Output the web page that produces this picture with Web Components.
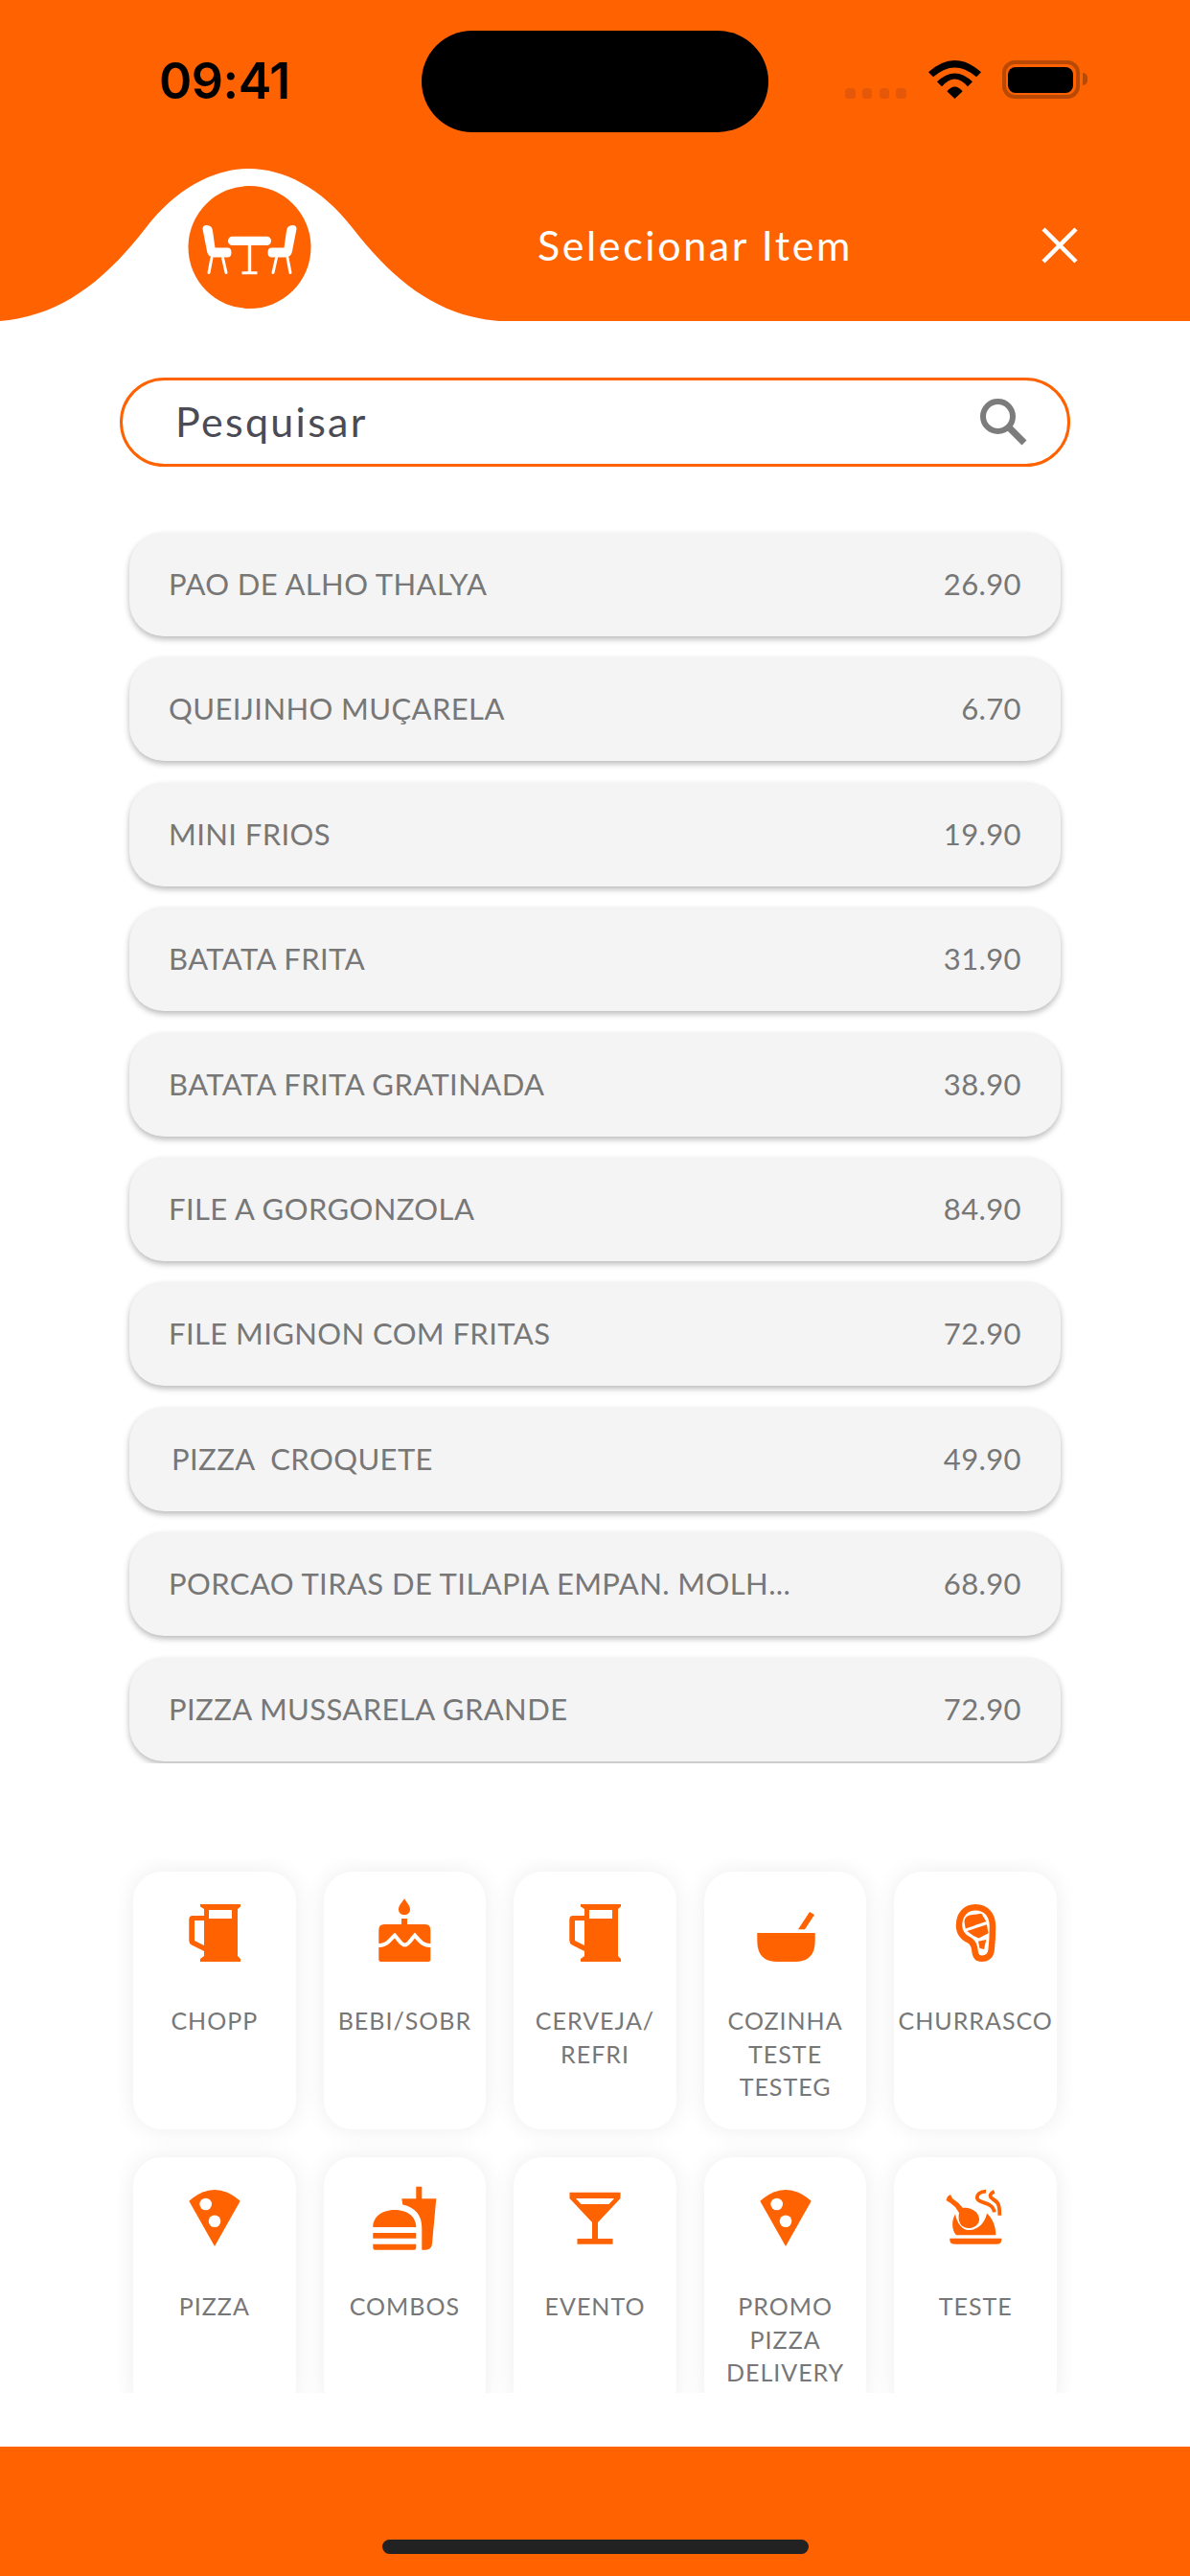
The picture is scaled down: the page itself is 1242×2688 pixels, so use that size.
<!DOCTYPE html>
<html lang="pt">
<head>
<meta charset="utf-8">
<title>Selecionar Item</title>
<style>
  html, body { margin: 0; padding: 0; background: #fff; }
  body { width: 1242px; height: 2688px; overflow: hidden; display: flex; flex-direction: column; font-family: "Lato", "Open Sans", sans-serif; }
</style>
</head>
<body>
<app-header title="Selecionar Item"></app-header>
<search-field placeholder="Pesquisar"></search-field>
<menu-list>
  <menu-row name="PAO DE ALHO THALYA" price="26.90"></menu-row>
  <menu-row name="QUEIJINHO MUÇARELA" price="6.70"></menu-row>
  <menu-row name="MINI FRIOS" price="19.90"></menu-row>
  <menu-row name="BATATA FRITA" price="31.90"></menu-row>
  <menu-row name="BATATA FRITA GRATINADA" price="38.90"></menu-row>
  <menu-row name="FILE A GORGONZOLA" price="84.90"></menu-row>
  <menu-row name="FILE MIGNON COM FRITAS" price="72.90"></menu-row>
  <menu-row name="PIZZA  CROQUETE" price="49.90" indent></menu-row>
  <menu-row name="PORCAO TIRAS DE TILAPIA EMPAN. MOLH..." price="68.90"></menu-row>
  <menu-row name="PIZZA MUSSARELA GRANDE" price="72.90"></menu-row>
</menu-list>
<category-grid>
  <category-card icon="mug" label="CHOPP"></category-card>
  <category-card icon="cake" label="BEBI/SOBR"></category-card>
  <category-card icon="mug" label="CERVEJA/ REFRI"></category-card>
  <category-card icon="bowl" label="COZINHA TESTE TESTEG"></category-card>
  <category-card icon="meat" label="CHURRASCO"></category-card>
  <category-card icon="pizza" label="PIZZA"></category-card>
  <category-card icon="combo" label="COMBOS"></category-card>
  <category-card icon="martini" label="EVENTO"></category-card>
  <category-card icon="pizza" label="PROMO PIZZA DELIVERY"></category-card>
  <category-card icon="chicken" label="TESTE"></category-card>
</category-grid>
<bottom-bar></bottom-bar>

<script>
const ORANGE = '#ff6200';
const ICONS = {
  mug: `<path fill-rule="evenodd" d="M25 20H67V22.5L64 25V74L67 77V80H25V77L29 74V69L16 62.5Q13.3 61 13.3 58V36Q13.3 32 17 32H29V25L25 22.5ZM34 26V35H58V26ZM19 37V58L29 63V37Z"/>`,
  cake: `<path d="M37 35H43V41H37ZM40 14C42 18 46 21 46 25.5C46 29 43.5 31 40 31C36.5 31 34 29 34 25.5C34 21 38 18 40 14ZM13.3 47Q13.3 41 19 41H62Q67.3 41 67.3 47V78Q67.3 80 65 80H15.5Q13.3 80 13.3 78Z"/><path fill="none" stroke="#fff" stroke-width="4" d="M11 62.5C20 65 24 58 30 52.5C35 58 37 62.5 40.5 62.5C44 62.5 46 58 51 52.5C56 58 60 65 70 62.5"/>`,
  bowl: `<path d="M10.3 50H70.7V58Q70.7 80 50 80H31Q10.3 80 10.3 58ZM53 46.3L65 28L70 31L60 46.3Z"/>`,
  meat: `<path fill="none" stroke="${ORANGE}" stroke-width="6.5" d="M40 23.2C52 23.2 58 32 58 43C58 52 57.6 60 56.6 68C55.8 74.500 51 76.800 47 76.800C42.500 76.800 40 74 39.500 69C39 63 37.500 59.500 33.500 57.500C27 54.500 23 50 23 42C23 31 30 23.200 40 23.200Z"/><path d="M28.5 38.500Q28.500 33 34 31.500L46.300 29.700L51.300 38L29.700 45.500ZM31.300 48L52 41.300L53.500 50.300L43.500 55.500L38 53ZM43 58.700L51.300 57L49 67L44.500 66Z"/>`,
  pizza: `<path d="M13.3 31.7Q40 8.3 66.7 31.7L40 79Z"/><circle cx="30.7" cy="35" r="6.3" fill="#fff"/><circle cx="40" cy="52.7" r="6.3" fill="#fff"/>`,
  combo: `<path d="M37.3 29.3H52.3V16.7H58.3V29.3H73.3L69 76Q68.5 82.7 62 82.7H58.3V60Q58.3 40 38.3 35.5ZM7.3 59C7.3 47 18 41 30 41C42 41 52.3 47 52.3 59ZM7.3 65H52.3V70.7H7.3ZM7.3 76.7H52.3V80.5Q52.3 82.7 50 82.7H9.5Q7.3 82.7 7.3 80.5Z"/>`,
  martini: `<path fill-rule="evenodd" d="M13.5 22.7H66.5V29L43 54V71H58.5V76.7H21.5V71H37V54L13.5 29ZM20 29L25.5 35H54.5L60 29Z"/>`,
  chicken: `<path d="M13.3 70.7H67.3V72.5Q67.3 76.7 62 76.7H19Q13.3 76.7 13.3 72.5ZM19 45.5C15 52 15 62 20 67.3H61.3C61.3 58 58 50 52 44.5C51 50 46 62 33 62C26 62 21 55 19 45.5Z"/><path d="M11 27L14 25L16 29L22 33.5L27 39C34 38 43 42 44 50C44.5 56 39 60 33 60C26 60 21 55 23 44L19 38L13.5 33.5L9.5 31Z"/><path fill="none" stroke="${ORANGE}" stroke-width="3.8" d="M51 21.7C45 21.7 41 25 42 29C43 33 51 33 55 36C58 38 59.5 40 59.7 43.3M59.7 21.7C56 23.5 53.5 26.5 58 29.5C63 32.5 65.3 34 65.3 46.7"/>`
};

class AppHeader extends HTMLElement {
  connectedCallback() {
    const shadow = this.attachShadow({ mode: 'open' });
    shadow.innerHTML = `
      <style>
        :host { display: block; position: relative; height: 335px; background: ${ORANGE}; flex: none; color: #fff; }
        .status { display: flex; align-items: flex-start; height: 176px; box-sizing: border-box; }
        .time { margin: 55px 0 0 166px; width: 274px; color: #000; font: 600 52px/60px "Inter", sans-serif; letter-spacing: -.5px; }
        .island { width: 362px; height: 106px; margin-top: 32px; border-radius: 53px; background: #000; }
        .dots { display: flex; gap: 7.3px; margin: 92px 0 0 80px; }
        .dots i { width: 10.5px; height: 10.5px; border-radius: 3.5px; background: #e5580a; }
        .wifi { margin: 63px 0 0 23px; }
        .battery { position: relative; box-sizing: border-box; width: 81px; height: 40px; margin: 63px 0 0 22px; border: 4px solid #b94a05; border-radius: 13px; padding: 2.5px; }
        .battery i { display: block; height: 100%; border-radius: 8px; background: #000; }
        .battery b { position: absolute; right: -12px; top: 9px; width: 5px; height: 13px; background: #b94a05; border-radius: 0 6px 6px 0; }
        .nav { display: flex; align-items: center; height: 60px; margin-top: 50px; position: relative; }
        .title { margin-left: 561px; width: 526px; font: 400 43px/60px "Lato", sans-serif; letter-spacing: 2.6px; }
        .hump { position: absolute; left: 0; bottom: -1px; }
      </style>
      <svg class="hump" width="540" height="161" viewBox="0 175 540 161">
        <path fill="#fff" d="M-20 336C50 336 100 305 152 238C185 195 225 176 260 176C295 176 335 195 368 238C420 305 470 336 540 336Z"/>
        <circle cx="260.5" cy="258" r="64" fill="${ORANGE}"/>
        <g transform="translate(196.5 194)" fill="#fff">
          <g id="chair">
            <path d="M15 45Q15 41 19 41Q25 41 25.5 47L28 64.5H41Q45 64.5 45 69.5Q45 74.5 41 74.5H27Q20.5 74.5 19.5 68Z"/>
            <path fill="none" stroke="#fff" stroke-width="3" stroke-linecap="round" d="M24.5 75L21.5 90.5M36 75L39.5 90.5"/>
          </g>
          <use href="#chair" transform="matrix(-1 0 0 1 128 0)"/>
          <rect x="41.5" y="52.7" width="45" height="9.3" rx="4.6"/>
          <path d="M62.3 62H65.7V89.3H72V92.3H56V89.3H62.3Z"/>
        </g>
      </svg>
      <div class="status">
        <div class="time">09:41</div>
        <div class="island"></div>
        <div class="dots"><i></i><i></i><i></i><i></i></div>
        <svg class="wifi" width="55" height="40" viewBox="0 0 55 40"><path d="M0 12.3Q27.5 -12.2 55 12.3L50 17.3Q27.5 -2.5 5 17.3ZM9 22.3Q27.5 4.5 46 22.3L41 27.3Q27.5 11.5 14 27.3ZM19.3 32.3Q27.5 22.5 35.7 32.3L27.5 40Z"/></svg>
        <div class="battery"><i></i><b></b></div>
      </div>
      <div class="nav">
        <div class="title">${this.getAttribute('title')}</div>
        <svg width="38" height="38" viewBox="0 0 38 38"><path stroke="#fff" stroke-width="4.5" d="M2 2L36 36M36 2L2 36"/></svg>
      </div>`;
  }
}

class SearchField extends HTMLElement {
  connectedCallback() {
    const shadow = this.attachShadow({ mode: 'open' });
    shadow.innerHTML = `
      <style>
        :host { display: flex; align-items: center; justify-content: space-between; flex: none; box-sizing: border-box; height: 93px; margin: 59px 125px 0; padding: 0 42px 2px 55px; border: 3px solid ${ORANGE}; border-radius: 46.5px; }
        span { color: #4b4b55; font: 400 43px/50px "Lato", sans-serif; letter-spacing: 2.3px; }
      </style>
      <span>${this.getAttribute('placeholder')}</span>
      <svg width="50" height="50" viewBox="0 0 50 50" fill="none" stroke="#7c7c7c"><circle cx="19.5" cy="19.5" r="15.5" stroke-width="6"/><path stroke-width="7" d="M30 30L47 47"/></svg>`;
  }
}

class MenuList extends HTMLElement {
  connectedCallback() {
    const shadow = this.attachShadow({ mode: 'open' });
    // the list is a scroller: the last row's shadow gets cut at its lower edge
    shadow.innerHTML = `
      <style>:host { display: flex; flex-direction: column; gap: 22.4px; flex: none; height: 1294px; box-sizing: border-box; margin: 59px 125px 0; padding: 10px 10px 0; overflow: hidden; }</style>
      <slot></slot>`;
  }
}

class MenuRow extends HTMLElement {
  connectedCallback() {
    const shadow = this.attachShadow({ mode: 'open' });
    shadow.innerHTML = `
      <style>
        :host { display: flex; align-items: center; justify-content: space-between; flex: none; box-sizing: border-box; height: 108px; padding: 0 41px 2px 41px; border-radius: 36px; background: #f4f4f4; box-shadow: 0 3px 6px rgba(0,0,0,.28); color: #777; font: 400 31px/40px "Lato", sans-serif; letter-spacing: .4px; }
        :host([indent]) { padding-left: 44px; }
        .name { white-space: pre; }
      </style>
      <span class="name">${this.getAttribute('name')}</span>
      <span>${this.getAttribute('price')}</span>`;
  }
}

class CategoryGrid extends HTMLElement {
  connectedCallback() {
    const shadow = this.attachShadow({ mode: 'open' });
    shadow.innerHTML = `
      <style>
        :host { display: grid; grid-template-columns: repeat(5, 1fr); grid-auto-rows: 269px; gap: 29px; flex: none; box-sizing: border-box; height: 557px; margin: 100px 124px 0; padding: 13px 15px 0; overflow: hidden; }
      </style>
      <slot></slot>`;
  }
}

class CategoryCard extends HTMLElement {
  connectedCallback() {
    const shadow = this.attachShadow({ mode: 'open' });
    shadow.innerHTML = `
      <style>
        :host { display: flex; flex-direction: column; align-items: center; box-sizing: border-box; padding-top: 14px; border-radius: 30px; background: #fff; box-shadow: 0 0 24px rgba(0,0,0,.075); min-width: 0; }
        svg { flex: none; fill: ${ORANGE}; overflow: visible; }
        .label { margin-top: 44px; text-align: center; color: #777; font: 400 25px/34.5px "Lato", sans-serif; letter-spacing: 1px; }
      </style>
      <svg width="80" height="80" viewBox="0 0 80 80">${ICONS[this.getAttribute('icon')]}</svg>
      <div class="label">${this.getAttribute('label')}</div>`;
  }
}

class BottomBar extends HTMLElement {
  connectedCallback() {
    const shadow = this.attachShadow({ mode: 'open' });
    shadow.innerHTML = `
      <style>
        :host { display: flex; justify-content: center; flex: none; height: 135px; margin-top: 56px; background: ${ORANGE}; }
        i { width: 445px; height: 15px; margin-top: 97px; border-radius: 8px; background: #222; }
      </style>
      <i></i>`;
  }
}

customElements.define('app-header', AppHeader);
customElements.define('search-field', SearchField);
customElements.define('menu-list', MenuList);
customElements.define('menu-row', MenuRow);
customElements.define('category-grid', CategoryGrid);
customElements.define('category-card', CategoryCard);
customElements.define('bottom-bar', BottomBar);
</script>
</body>
</html>
